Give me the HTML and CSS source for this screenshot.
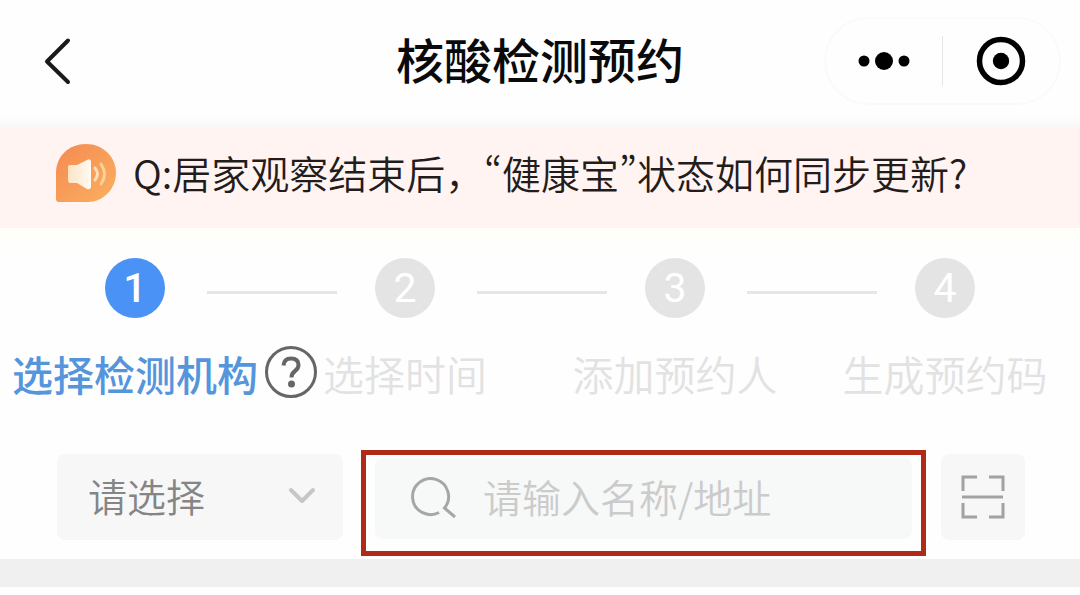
FILE: index.html
```html
<!DOCTYPE html>
<html lang="zh-CN">
<head>
  <meta charset="utf-8">
  <meta name="viewport" content="width=device-width, initial-scale=1">
  <title>核酸检测预约</title>
  <link rel="stylesheet" href="styles.css">
</head>
<body>
  <header class="navbar">
    <button class="back" type="button" aria-label="返回">
      <svg width="28" height="50" viewBox="0 0 28 50" fill="none" stroke="#1a1a1a" stroke-width="4" stroke-linecap="round" stroke-linejoin="round"><path d="M24 4.500L3 25.500L24 46"/></svg>
    </button>
    <h1 class="title">核酸检测预约</h1>
    <div class="capsule">
      <button class="capsule-button" type="button" aria-label="更多">
        <svg width="54" height="20" viewBox="0 0 54 20" fill="#000"><circle cx="7" cy="10" r="5.500"/><circle cx="27" cy="10" r="9"/><circle cx="47" cy="10" r="5.500"/></svg>
      </button>
      <span class="capsule-divider"></span>
      <button class="capsule-button" type="button" aria-label="关闭">
        <svg width="50" height="50" viewBox="0 0 50 50"><circle cx="25" cy="25" r="21.500" fill="none" stroke="#000" stroke-width="5.500"/><circle cx="25" cy="25" r="8.200" fill="#000"/></svg>
      </button>
    </div>
  </header>

  <main>
    <a class="notice" href="#notice">
      <svg class="notice-icon" width="62" height="60" viewBox="0 0 62 60" aria-hidden="true">
        <defs>
          <linearGradient id="bubble" x1="0" y1="0" x2="1" y2="1"><stop offset="0" stop-color="#f48a52"/><stop offset="1" stop-color="#fbb05f"/></linearGradient>
          <linearGradient id="cone" x1="0" y1="0" x2="1" y2="0"><stop offset="0" stop-color="#fde3c4"/><stop offset="1" stop-color="#fffaf2"/></linearGradient>
        </defs>
        <path d="M1 30C1 13 14 1 31 1S61 14 61 30S48 59 33 59H4Q1 59 1 56Z" fill="url(#bubble)"/>
        <path d="M15 22Q13 22 13 24V37Q13 40 15 40H22L32 46Q36 47 36 43V19Q36 15 32 17L22 22Z" fill="url(#cone)"/>
        <path d="M40 25Q45 31 40 37" fill="none" stroke="#fde0b5" stroke-width="3" stroke-linecap="round"/>
        <path d="M46 21Q53 31 46 41" fill="none" stroke="#fbd09a" stroke-width="3" stroke-linecap="round"/>
      </svg>
      <span class="notice-text">Q:居家观察结束后，<span class="quote">“</span>健康宝<span class="quote">”</span>状态如何同步更新?</span>
    </a>

    <section class="steps" aria-label="预约步骤">
      <div class="track" aria-hidden="true">
        <span class="dot dot-active">1</span>
        <span class="line"></span>
        <span class="dot">2</span>
        <span class="line"></span>
        <span class="dot">3</span>
        <span class="line"></span>
        <span class="dot">4</span>
      </div>
      <ol class="labels">
        <li class="label label-active" aria-current="step">选择检测机构
          <button class="help" type="button" aria-label="帮助">
            <svg width="54" height="54" viewBox="0 0 54 54" fill="none" stroke="#666"><circle cx="27" cy="27" r="24.500" stroke-width="3"/><path d="M19.500 20.500Q20 13.500 27 13.500Q34.500 13.500 34.500 20Q34.500 23.500 31 26Q27.500 28.500 27.500 32.500" stroke-width="4"/><circle cx="27.500" cy="39" r="3.500" fill="#666" stroke="none"/></svg>
          </button>
        </li>
        <li class="label">选择时间</li>
        <li class="label">添加预约人</li>
        <li class="label">生成预约码</li>
      </ol>
    </section>

    <form class="filters">
      <div class="picker">
        <select class="picker-select" aria-label="区域">
          <option>请选择</option>
        </select>
        <svg class="picker-arrow" width="28" height="18" viewBox="0 0 28 18" fill="none" stroke="#c6c6c6" stroke-width="4" stroke-linecap="round" stroke-linejoin="round" aria-hidden="true"><path d="M3 3L14 14L25 3"/></svg>
      </div>
      <div class="search">
        <label class="search-field">
          <svg class="search-icon" width="46" height="44" viewBox="0 0 46 44" fill="none" stroke="#a6a6a6" stroke-width="3" aria-hidden="true"><path d="M28 35.500A18 18 0 1 1 33.500 31L44 40"/></svg>
          <input class="search-input" type="text" placeholder="请输入名称/地址" aria-label="请输入名称/地址">
        </label>
      </div>
      <button class="scan" type="button" aria-label="扫一扫">
        <svg width="44" height="44" viewBox="0 0 44 44" fill="none" stroke="#a2a2a2" stroke-width="3"><path d="M2 16V2H16M28 2H42V16M42 28V42H28M16 42H2V28M1 22H42"/></svg>
      </button>
    </form>
    <div class="band"></div>
  </main>
</body>
</html>
```
FILE: styles.css
```css
* {
  box-sizing: border-box;
}

body {
  margin: 0;
  background: #fefefe;
  color: #241c1a;
  font-family: "Noto Sans CJK SC", "Noto Sans", sans-serif;
  font-size: 39px;
  font-weight: 350;
}

button {
  display: flex;
  align-items: center;
  justify-content: center;
  padding: 0;
  border: 0;
  background: none;
  cursor: pointer;
}

.navbar {
  display: grid;
  grid-template-columns: 1fr auto 1fr;
  align-items: center;
  height: 127px;
  padding: 0 19px 5px;
  background: linear-gradient(#fefefe 116px, #f9f8f8);
}

.back {
  justify-self: start;
  padding-left: 25px;
}

.title {
  margin: 0;
  padding-bottom: 6px;
  color: #0a0a0a;
  font-size: 48px;
  font-weight: 500;
  line-height: 64px;
}

.capsule {
  display: flex;
  align-items: center;
  justify-self: end;
  height: 88px;
  border: 2px solid #fafafa;
  border-radius: 44px;
}

.capsule-button {
  width: 116px;
  height: 80px;
}

.capsule-divider {
  width: 1px;
  height: 50px;
  background: #e6e6e6;
}

.notice {
  display: flex;
  align-items: center;
  gap: 16px;
  height: 101px;
  padding: 0 55px 9px;
  background: #fff4f2;
  color: inherit;
  line-height: 56px;
  text-decoration: none;
  white-space: nowrap;
}

.notice-icon {
  flex: none;
}

.notice-text {
  padding-bottom: 2px;
}

.quote {
  font-feature-settings: "pwid";
}

.steps {
  padding-top: 30px;
  background: linear-gradient(#fffef9, #fefefe 28px);
}

.track {
  display: flex;
  align-items: center;
  padding: 0 calc(12.5% - 30px);
}

.dot {
  flex: none;
  width: 60px;
  height: 60px;
  border-radius: 50%;
  background: #e4e4e4;
  color: #fff;
  font-family: Roboto, sans-serif;
  font-size: 41px;
  font-weight: 400;
  line-height: 60px;
  text-align: center;
}

.dot-active {
  background: #4a92f5;
  font-weight: 500;
}

.line {
  flex: 1;
  height: 3px;
  margin: 8px 38px 0 42px;
  background: #e6e6e6;
}

.labels {
  display: grid;
  grid-template-columns: repeat(4, 1fr);
  margin: 0;
  padding: 23px 0 0;
  list-style: none;
}

.label {
  position: relative;
  color: #e2e2e2;
  font-size: 41px;
  line-height: 64px;
  text-align: center;
  white-space: nowrap;
}

.label-active {
  color: #5595dc;
  font-weight: 500;
}

.help {
  position: absolute;
  top: 4px;
  right: -48px;
}

.filters {
  display: flex;
  align-items: flex-start;
  padding: 45px 55px 3px 57px;
}

.picker {
  position: relative;
  flex: none;
  width: 286px;
  margin: 4px 18px 0 0;
}

.picker-select {
  width: 100%;
  height: 86px;
  padding: 0 60px 4px 31px;
  border: 0;
  border-radius: 8px;
  background: #f7f7f8;
  color: #858585;
  font: inherit;
  appearance: none;
}

.picker-arrow {
  position: absolute;
  top: 33px;
  right: 27px;
  pointer-events: none;
}

.search {
  flex: 1;
  min-width: 0;
  padding: 3px 9px 12px;
  border: 5px solid #b02a18;
}

.search-field {
  display: flex;
  align-items: center;
  gap: 26px;
  height: 81px;
  padding-left: 36px;
  border-radius: 8px;
  background: #f7f8f8;
}

.search-icon {
  flex: none;
}

.search-input {
  flex: 1;
  min-width: 0;
  height: 64px;
  padding: 0 0 6px;
  border: 0;
  background: none;
  color: #858585;
  font: inherit;
}

.search-input::placeholder {
  color: #cbcbcb;
}

.scan {
  flex: none;
  width: 84px;
  height: 86px;
  margin: 4px 0 0 15px;
  border-radius: 8px;
  background: #f7f7f7;
}

.band {
  height: 28px;
  background: #f0f0f1;
}
```
